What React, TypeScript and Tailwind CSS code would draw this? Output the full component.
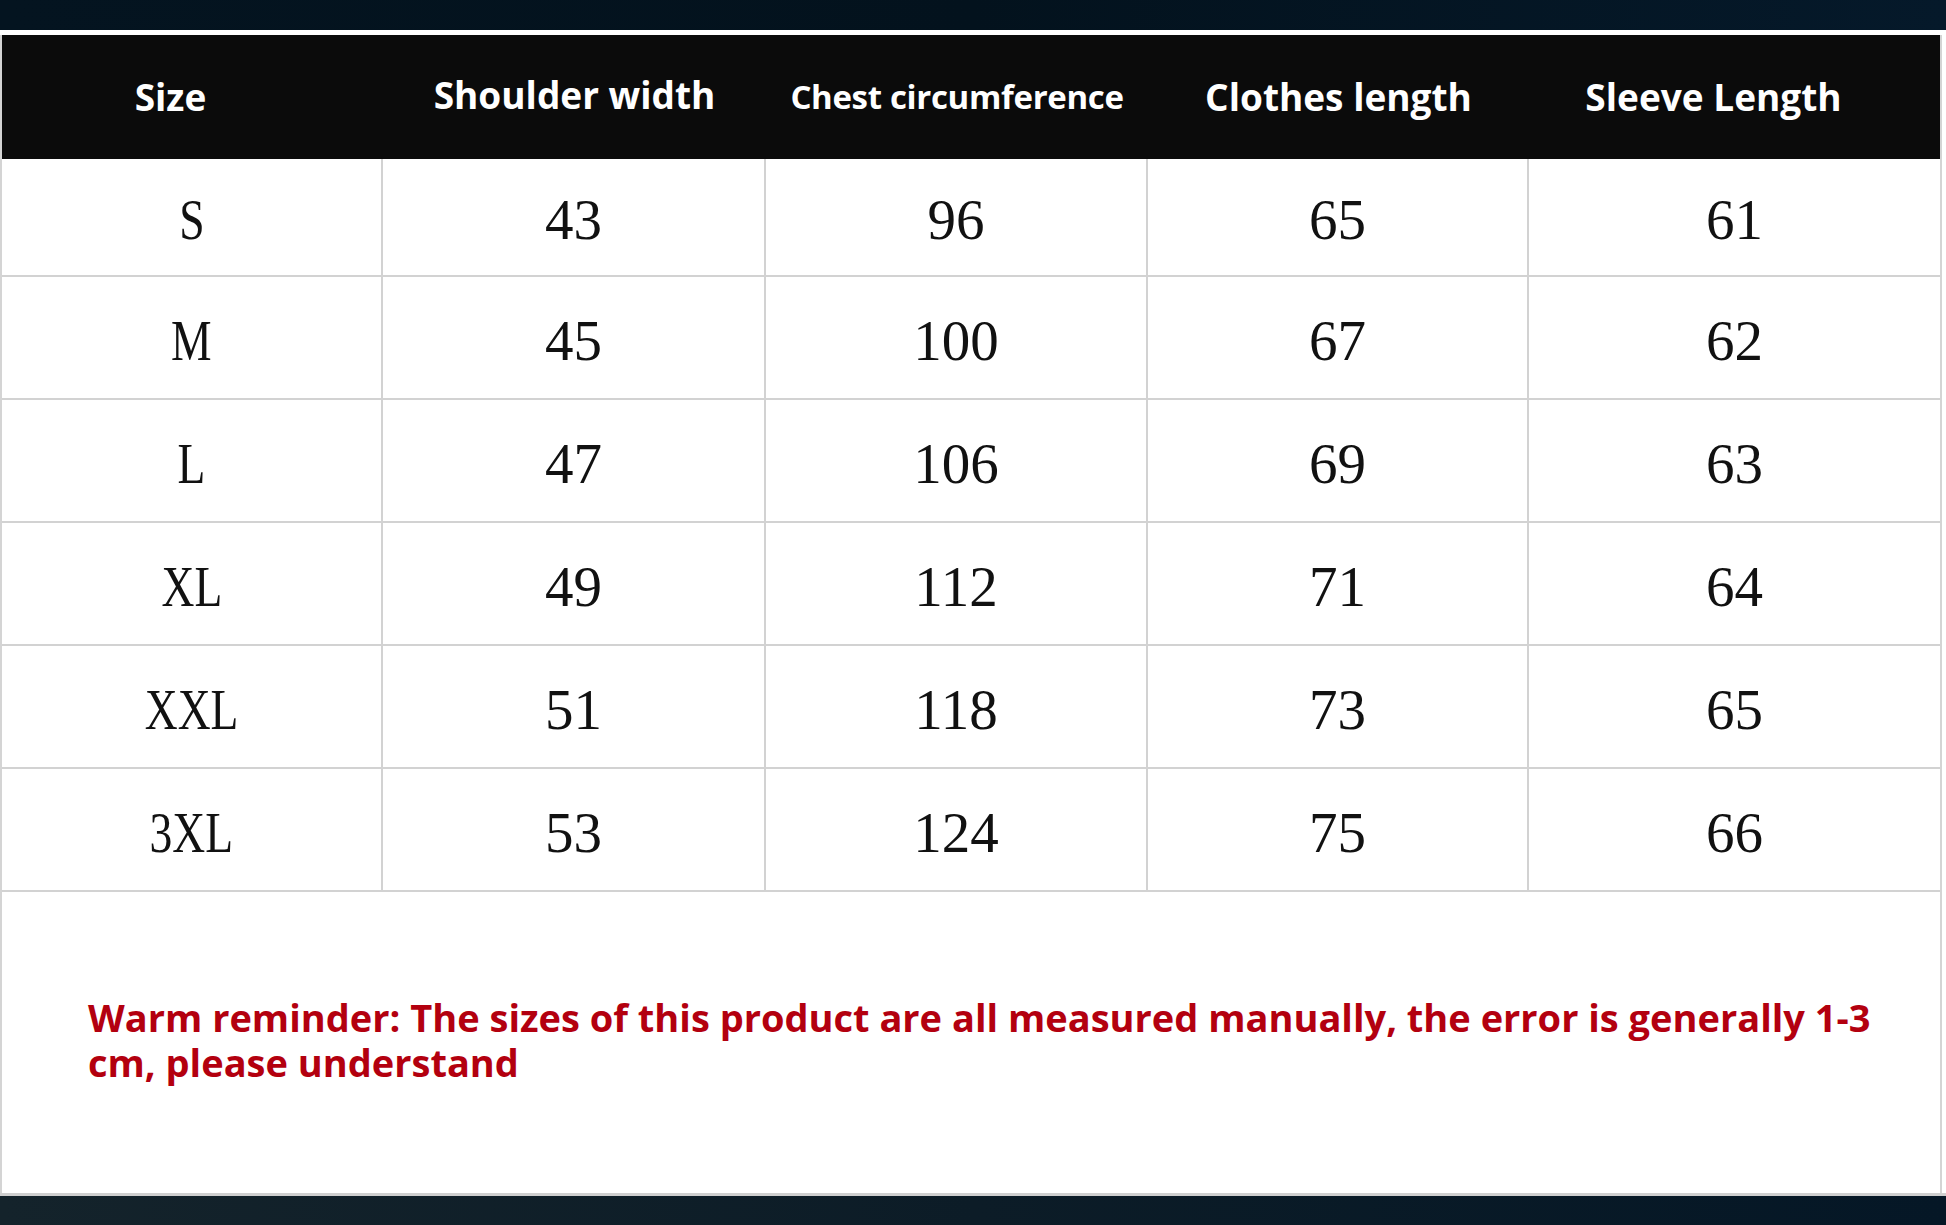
import React from 'react';

const headers = [
  { label: 'Size', cls: 'text-[37px] pr-[44px]' },
  { label: 'Shoulder width', cls: 'text-[37px] -mt-[5px]' },
  { label: 'Chest circumference', cls: 'text-[33px] tracking-[-0.01em]' },
  { label: 'Clothes length', cls: 'text-[37px]' },
  { label: 'Sleeve Length', cls: 'text-[37px] pr-[42px]' },
];

const rows = [
  ['S', '43', '96', '65', '61'],
  ['M', '45', '100', '67', '62'],
  ['L', '47', '106', '69', '63'],
  ['XL', '49', '112', '71', '64'],
  ['XXL', '51', '118', '73', '65'],
  ['3XL', '53', '124', '75', '66'],
];

export default function App() {
  return (
    <div className="w-[1946px] h-[1225px] flex flex-col bg-white overflow-hidden">
      {/* top strip */}
      <div className="h-[30px] bg-gradient-to-r from-[#041420] via-[#03121d] to-[#05192a]"></div>

      <div className="flex-1 flex flex-col bg-white pt-[5px] pr-[4px]">
        <div className="flex flex-col border-l-2 border-r-2 border-[#d4d4d4] flex-1">
          {/* header */}
          <div className="grid grid-cols-[381px_383px_382px_381px_1fr] h-[124px] bg-[#0b0b0b] font-['Open_Sans',sans-serif] font-bold text-white">
            {headers.map((h) => (
              <div key={h.label} className={`flex items-center justify-center ${h.cls}`}>
                {h.label}
              </div>
            ))}
          </div>

          {/* rows */}
          {rows.map((r, i) => (
            <div
              key={r[0]}
              className={`grid grid-cols-[381px_383px_382px_381px_1fr] border-b-2 border-[#d2d2d2] ${i === 0 ? 'h-[118px]' : 'h-[123px]'}`}
            >
              {r.map((v, j) => (
                <div
                  key={j}
                  className={`flex items-center justify-center pt-[6px] font-['Liberation_Serif',serif] text-[57px] text-[#111111] ${j < 4 ? 'border-r-2 border-[#d2d2d2]' : ''}`}
                >
                  <span className={j === 0 ? 'inline-block scale-x-[0.8]' : ''}>{v}</span>
                </div>
              ))}
            </div>
          ))}

          {/* reminder */}
          <div className="flex-1 pt-[103px] pl-[86px] pr-[60px]">
            <p className="font-['Open_Sans',sans-serif] font-bold text-[38px] leading-[45px] text-[#b3000f] max-w-[1800px]">
              Warm reminder: The sizes of this product are all measured manually, the error is generally 1-3 cm, please understand
            </p>
          </div>
        </div>
      </div>

      <div className="h-[3px] bg-[#cfcfcf]"></div>
      {/* bottom strip */}
      <div className="h-[29px] bg-gradient-to-r from-[#14232b] via-[#0c1c27] to-[#051726]"></div>
    </div>
  );
}
